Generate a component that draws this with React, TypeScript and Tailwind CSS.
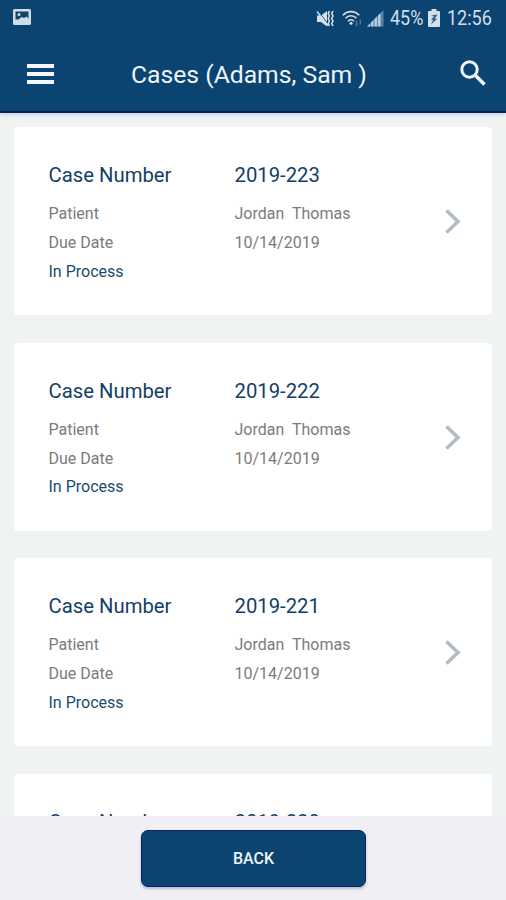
type Case = {
  number: string;
  patient?: string;
  due?: string;
  status?: string;
};

const cases: Case[] = [
  { number: "2019-223", patient: "Jordan  Thomas", due: "10/14/2019", status: "In Process" },
  { number: "2019-222", patient: "Jordan  Thomas", due: "10/14/2019", status: "In Process" },
  { number: "2019-221", patient: "Jordan  Thomas", due: "10/14/2019", status: "In Process" },
  { number: "2019-220" },
];

function StatusBar() {
  return (
    <div className="flex h-9 items-center pl-[13px] pr-[14px] text-[#d3dfea]">
      <svg className="mb-0.5 h-4 w-[18px]" viewBox="0 0 18 16">
        <rect width="18" height="16" rx="1.5" fill="#cfdce9" />
        <path d="M2.500 2.500H15.500V9.500L13.500 7.500L11 9L8.500 8L5.500 10.500H2.500z" fill="#13426b" />
        <circle cx="6" cy="5.500" r="1.500" fill="#cfdce9" />
      </svg>
      <div className="grow" />
      <svg className="mr-[8px] h-[17px] w-[18px]" viewBox="0 0 18 17" fill="currentColor">
        <path d="M1 5.500h4l6-4.500v15.500l-6-4.500H1z" />
        <path d="M2 1l10.500 13.500" stroke="#0b4470" strokeWidth="1" />
        <path d="M1 1.500l11 14" stroke="currentColor" strokeWidth="1.400" />
        <path d="M13.300 1l-1 2.500 1 2.500-1 2.500 1 2.500-1 2.500 1 2.500M17 1l-1.300 2.500L17 6l-1.300 2.500L17 11l-1.300 2.500L17 16" fill="none" stroke="currentColor" strokeWidth="1.600" />
      </svg>
      <svg className="mr-[4px] h-[17px] w-[21px]" viewBox="0 0 21 17" fill="none" stroke="currentColor" strokeWidth="1.600">
        <path d="M.8 5.200c4.600-4.800 11.800-4.800 16.400 0" />
        <path d="M3.500 8.200c3-3.200 8-3.200 11 0" />
        <path d="M6 11.200c1.600-1.900 4.400-1.900 6 0" />
        <circle cx="9" cy="13.300" r="1.500" fill="currentColor" stroke="none" />
        <path d="M14.500 11v5M18.300 9.500v5" stroke="#4f7c9f" strokeWidth="1.500" />
      </svg>
      <svg className="mr-[6px] h-[17px] w-[17px]" viewBox="0 0 17 17">
        <path d="M0 16.500L16.500 0v16.500z" fill="#5b83a5" />
        <path d="M0 16.500L3 13.500v3zM4 12.500l2.500-2.500v6.500H4zM7.500 9L10 6.500v10H7.500zM11 5.500L13.500 3v13.500H11z" fill="#b7c9da" />
      </svg>
      <span className="w-[34px] origin-left scale-x-[0.9] whitespace-nowrap text-[20px] leading-9">45%</span>
      <svg className="ml-[4px] mr-[7px] h-[18px] w-3" viewBox="0 0 12 18">
        <path d="M3.500 0h5v2H11q1 0 1 1v14q0 1-1 1H1q-1 0-1-1V3q0-1 1-1h2.500z" fill="currentColor" />
        <path d="M3 6.500L9.500 5.500L7 9.500L9 10L3 15.500L5 11L3 10.500L6 7.500z" fill="#35618a" />
      </svg>
      <span className="w-[45px] origin-left scale-x-[0.9] whitespace-nowrap text-[20px] leading-9">12:56</span>
    </div>
  );
}

function Header() {
  return (
    <header className="h-[113px] shrink-0 border-b-2 border-[#0a2360] bg-[#0b4470] shadow-[0_2px_3px_#d3d3e2]">
      <StatusBar />
      <div className="flex h-[75px] items-center pl-[27px] pr-[20px]">
        <div className="flex w-[27px] flex-col gap-1">
          <div className="h-1 bg-[#f4f7ff]" />
          <div className="h-1 bg-[#f4f7ff]" />
          <div className="h-1 bg-[#f4f7ff]" />
        </div>
        <h1 className="ml-[77px] grow whitespace-nowrap pt-[3px] text-[24.7px] leading-8 text-[#eef4fb]">Cases (Adams, Sam )</h1>
        <svg className="mb-px h-[26px] w-[26px]" viewBox="0 0 26 26" fill="none" stroke="#f2f6fb" strokeWidth="3">
          <circle cx="9.500" cy="9.500" r="7.700" />
          <path d="M15 15l9.500 9.500" strokeWidth="3.600" />
        </svg>
      </div>
    </header>
  );
}

function CaseCard({ item }: { item: Case }) {
  return (
    <div className="flex h-[188px] shrink-0 rounded-[4px] bg-white pl-[34.5px] pr-[31px] pt-[34px]">
      <div className="w-[186px] text-[16px] text-[#7b7b7b]">
        <div className="mb-4 h-7 text-[20.3px] leading-[29px] text-[#123f68]">Case Number</div>
        {item.patient && <div className="h-[29px] leading-[18px]">Patient</div>}
        {item.due && <div className="h-[28.500px] leading-[18px]">Due Date</div>}
        {item.status && <div className="leading-[18px] text-[#174d72]">{item.status}</div>}
      </div>
      <div className="grow text-[16px] text-[#7b7b7b]">
        <div className="mb-4 h-7 text-[20.3px] leading-[29px] text-[#123f68]">{item.number}</div>
        {item.patient && <div className="h-[29px] whitespace-pre leading-[18px]">{item.patient}</div>}
        {item.due && <div className="leading-[18px]">{item.due}</div>}
      </div>
      <svg className="mt-[48px] h-[25px] w-4" viewBox="0 0 16 25" fill="none" stroke="#b2bbc7" strokeWidth="3.600">
        <path d="M1.500 1.500L13 12.500L1.500 23.500" />
      </svg>
    </div>
  );
}

export default function App() {
  return (
    <div className="flex h-[900px] w-[506px] flex-col overflow-hidden bg-[#eff3f2] font-['Roboto',sans-serif]">
      <Header />
      <main className="flex min-h-0 grow flex-col gap-[27.700px] overflow-hidden px-[14px] pt-[14px]">
        {cases.map((item) => (
          <CaseCard key={item.number} item={item} />
        ))}
      </main>
      <footer className="flex h-[84px] shrink-0 justify-center bg-[#f0eff4] pl-px pt-[14px]">
        <button className="h-[57px] w-[225px] rounded-[7px] border-[1.500px] border-[#0a2360] bg-[#0b4470] text-[16px] font-medium text-[#eef4fb] shadow-[0_2px_3px_#b9bacb]">
          BACK
        </button>
      </footer>
    </div>
  );
}
